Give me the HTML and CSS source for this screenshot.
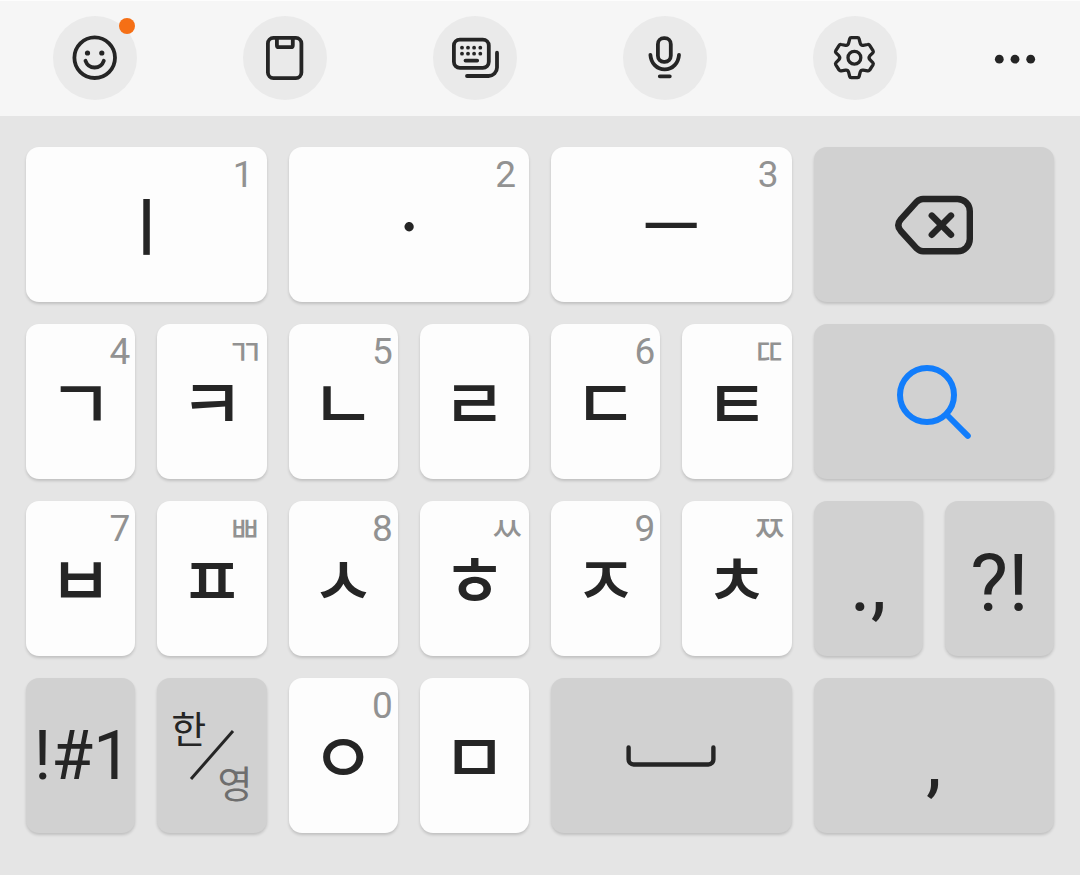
FILE: index.html
```
<!DOCTYPE html>
<html lang="ko">
<head>
    <meta charset="UTF-8">
    <meta name="viewport" content="width=device-width, initial-scale=1.0">
    <title>천지인 키보드</title>
    <link rel="stylesheet" href="styles.css">
</head>
<body>
    <div class="toolbar">
        <button class="tool" aria-label="이모티콘">
            <svg viewBox="0 0 84 84">
                <circle cx="41.7" cy="41.7" r="20.3"/>
                <circle class="dot" cx="34.5" cy="37" r="2.6"/>
                <circle class="dot" cx="48.8" cy="37" r="2.6"/>
                <path d="M32.5 44.8C34 49 37.5 51.5 41.6 51.5S49.3 49 50.8 44.8"/>
            </svg>
            <span class="badge"></span>
        </button>
        <button class="tool" aria-label="클립보드">
            <svg viewBox="0 0 84 84">
                <rect x="24.9" y="21.9" width="33.5" height="40.2" rx="5.5"/>
                <path d="M33.9 22V29.2a2 2 0 0 0 2 2H47.8a2 2 0 0 0 2-2V22"/>
            </svg>
        </button>
        <button class="tool" aria-label="키보드 모드">
            <svg viewBox="0 0 84 84">
                <rect x="20.9" y="23.6" width="34.9" height="28.2" rx="6"/>
                <g class="dot">
                    <circle cx="29" cy="31.7" r="1.9"/>
                    <circle cx="35" cy="31.7" r="1.9"/>
                    <circle cx="41.1" cy="31.7" r="1.9"/>
                    <circle cx="47.3" cy="31.7" r="1.9"/>
                    <circle cx="29" cy="37.7" r="1.9"/>
                    <circle cx="35" cy="37.7" r="1.9"/>
                    <circle cx="41.1" cy="37.7" r="1.9"/>
                    <circle cx="47.3" cy="37.7" r="1.9"/>
                </g>
                <path d="M32.5 44.6H44.2M64 36.7V51.5a8.5 8.5 0 0 1-8.5 8.5H34"/>
            </svg>
        </button>
        <button class="tool" aria-label="음성 입력">
            <svg viewBox="0 0 84 84">
                <rect x="34.9" y="22.2" width="12.9" height="23.6" rx="6"/>
                <path d="M27.4 38.8C28 47 33.5 53.4 41.7 53.4S55.4 47 56 38.8M36.8 60.3H46.8"/>
            </svg>
        </button>
        <button class="tool" aria-label="설정">
            <svg viewBox="0 0 84 84">
                <path class="thin" d="M38.2 21.7H44.6Q45.8 21.7 46.1 22.9L47.2 27.2Q47.8 29.6 50.2 29.3L54.6 28.5Q56 28.2 56.7 29.4L60 34.6Q60.7 35.8 59.8 36.8L56.9 39.7Q55.2 41.7 56.9 43.7L59.8 46.6Q60.7 47.6 60 48.8L56.7 54Q56 55.2 54.6 54.9L50.2 54.1Q47.8 53.8 47.2 56.2L46.1 60.5Q45.8 61.7 44.6 61.7H38.2Q37 61.7 36.7 60.5L35.6 56.2Q35 53.8 32.6 54.1L28.2 54.9Q26.8 55.2 26.1 54L22.8 48.8Q22.1 47.6 23 46.6L25.9 43.7Q27.6 41.7 25.9 39.7L23 36.8Q22.1 35.8 22.8 34.6L26.1 29.4Q26.8 28.2 28.2 28.5L32.6 29.3Q35 29.6 35.6 27.2L36.7 22.9Q37 21.7 38.2 21.7Z"/>
                <circle class="thin" cx="41.4" cy="41.7" r="6.4"/>
            </svg>
        </button>
        <button class="tool more" aria-label="더보기">
            <svg viewBox="0 0 84 84">
                <g class="dot">
                    <circle cx="26.3" cy="43.2" r="4.4"/>
                    <circle cx="42" cy="43.2" r="4.4"/>
                    <circle cx="57.7" cy="43.2" r="4.4"/>
                </g>
            </svg>
        </button>
    </div>

    <div class="keyboard">
        <button class="key wide vowel">ㅣ<span class="hint">1</span></button>
        <button class="key wide vowel">ㆍ<span class="hint">2</span></button>
        <button class="key wide vowel">ㅡ<span class="hint">3</span></button>
        <button class="key wide fn" aria-label="삭제">
            <svg class="icon-delete" viewBox="0 0 80 60">
                <path d="M29 4H63.5A12.3 12.3 0 0 1 75.8 16.3V44A12.3 12.3 0 0 1 63.5 56.3H29Q25.5 56.3 22.8 53.6L6.8 36Q1.8 30.2 6.8 24.4L22.8 6.7Q25.5 4 29 4Z"/>
                <path d="M37.8 20.6L57 39.8M57 20.6L37.8 39.8"/>
            </svg>
        </button>

        <button class="key">ㄱ<span class="hint">4</span></button>
        <button class="key">ㅋ<span class="hint jamo">ㄲ</span></button>
        <button class="key">ㄴ<span class="hint">5</span></button>
        <button class="key">ㄹ</button>
        <button class="key">ㄷ<span class="hint">6</span></button>
        <button class="key">ㅌ<span class="hint jamo">ㄸ</span></button>
        <button class="key wide fn" aria-label="검색">
            <svg class="icon-search" viewBox="0 0 80 80">
                <circle cx="33" cy="33" r="27"/>
                <path d="M53 53L73.8 73.8"/>
            </svg>
        </button>

        <button class="key">ㅂ<span class="hint">7</span></button>
        <button class="key">ㅍ<span class="hint jamo">ㅃ</span></button>
        <button class="key">ㅅ<span class="hint">8</span></button>
        <button class="key">ㅎ<span class="hint jamo">ㅆ</span></button>
        <button class="key">ㅈ<span class="hint">9</span></button>
        <button class="key">ㅊ<span class="hint jamo">ㅉ</span></button>
        <button class="key fn punct">.,</button>
        <button class="key fn punct">?!</button>

        <button class="key fn symbols">!#1</button>
        <button class="key fn lang">
            <span class="lang-on">한</span>
            <svg class="icon-slash" viewBox="0 0 46 52"><path d="M2 50L44 2"/></svg>
            <span class="lang-off">영</span>
        </button>
        <button class="key">ㅇ<span class="hint">0</span></button>
        <button class="key">ㅁ</button>
        <button class="key wide fn" aria-label="스페이스">
            <svg class="icon-space" viewBox="0 0 90 22">
                <path d="M2.6 2.4V14.5a5 5 0 0 0 5 5H82.4a5 5 0 0 0 5-5V2.4"/>
            </svg>
        </button>
        <button class="key wide fn punct">,</button>
    </div>
</body>
</html>
```
FILE: styles.css
```
* {
    box-sizing: border-box;
}
body {
    margin: 0;
    min-height: 100vh;
    background: #e5e5e5;
    color: #252525;
    font-family: Roboto, 'Noto Sans CJK KR', sans-serif;
}
button {
    border: none;
    padding: 0;
    color: inherit;
    font-family: inherit;
    cursor: pointer;
}
svg {
    display: block;
    fill: none;
    stroke: #252525;
    stroke-linecap: round;
    stroke-linejoin: round;
}

/* toolbar */
.toolbar {
    display: grid;
    grid-template-columns: repeat(5, 19fr) 13fr;
    justify-items: center;
    padding: 15px 0 16px;
    background: #f6f6f6;
    border-top: 1px solid #fdfdfd;
}
.tool {
    position: relative;
    width: 84px;
    height: 84px;
    border-radius: 50%;
    background: #eaeaea;
}
.tool svg {
    stroke-width: 3.8;
}
.tool .thin {
    stroke-width: 3.3;
}
.tool .dot {
    fill: #252525;
    stroke: none;
}
.more {
    background: none;
}
.badge {
    position: absolute;
    top: 2px;
    right: 2px;
    width: 16px;
    height: 16px;
    border-radius: 50%;
    background: #f56f15;
}

/* keys */
.keyboard {
    display: grid;
    grid-template-columns: repeat(8, 1fr);
    grid-auto-rows: 155px;
    gap: 22px;
    padding: 31px 26px 42px;
}
.key {
    position: relative;
    display: flex;
    align-items: center;
    justify-content: center;
    padding-bottom: 4px;
    border-radius: 13px;
    background: #fdfdfd;
    box-shadow: 0 2px 3px rgba(0, 0, 0, 0.16);
    font-family: 'Noto Sans CJK KR', sans-serif;
    font-size: 70px;
    font-weight: 500;
    line-height: 80px;
}
.wide {
    grid-column: span 2;
}
.vowel {
    font-size: 62px;
}
.fn {
    padding-bottom: 0;
    background: #d1d1d1;
}
.hint {
    position: absolute;
    top: 6px;
    right: 5px;
    color: #929292;
    font-family: Roboto, sans-serif;
    font-size: 37px;
    font-weight: 400;
    line-height: 44px;
}
.wide .hint {
    right: 13px;
}
.jamo {
    font-family: 'Noto Sans CJK KR', sans-serif;
    line-height: 40px;
}
.symbols {
    padding-left: 4px;
    font-family: Roboto, sans-serif;
    font-size: 68px;
    font-weight: 400;
}
.punct {
    padding-top: 10px;
    font-family: Roboto, sans-serif;
    font-size: 80px;
    font-weight: 400;
}

/* language switch */
.lang {
    display: grid;
    justify-content: stretch;
    padding: 28px 14px 30px;
    font-size: 38px;
    font-weight: 400;
    line-height: 42px;
}
.lang > * {
    grid-area: 1 / 1;
}
.lang-on {
    place-self: start;
}
.lang-off {
    place-self: end;
    color: #6e6e6e;
}
.icon-slash {
    place-self: center;
    width: 46px;
    height: 52px;
    stroke-width: 3;
    stroke-linecap: butt;
}

/* key icons */
.icon-delete {
    width: 80px;
    height: 60px;
    stroke-width: 6.4;
}
.icon-search {
    width: 80px;
    height: 80px;
    stroke: #127dfb;
    stroke-width: 6;
}
.icon-space {
    width: 90px;
    height: 22px;
    stroke-width: 4.4;
}
```
